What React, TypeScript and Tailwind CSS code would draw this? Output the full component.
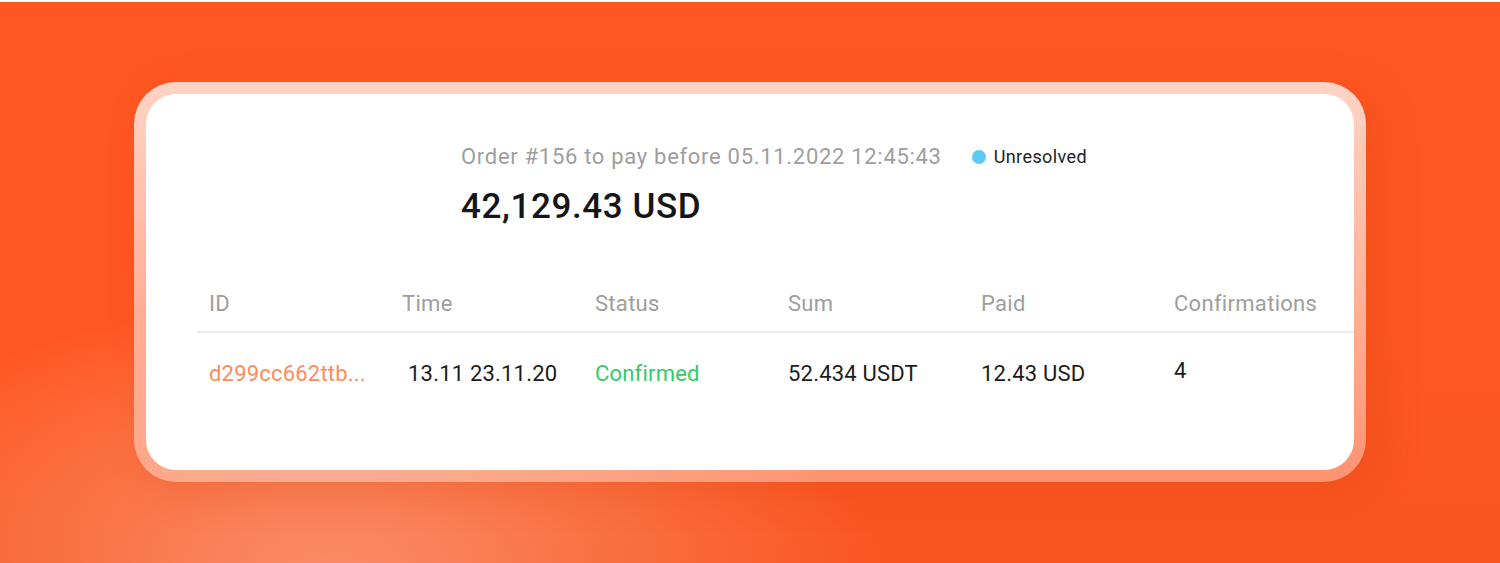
import React from "react";

const cols = ["ID", "Time", "Status", "Sum", "Paid", "Confirmations"];

export default function App() {
  return (
    <div className="w-[1500px] h-[563px] overflow-hidden relative bg-[#ff5722] font-['Roboto',sans-serif]">
      <div className="absolute inset-0 bg-[radial-gradient(ellipse_560px_300px_at_330px_600px,rgba(255,175,145,1),rgba(255,145,105,0.75)_45%,rgba(255,90,40,0)_100%)]" />
      <div className="absolute inset-0 bg-[linear-gradient(180deg,rgba(255,90,32,0)_60%,rgba(235,80,30,0.3)_100%)]" />
      <div className="absolute left-0 right-0 top-0 h-[2px] bg-white" />
      <div className="relative pt-[82px] pl-[134px]">
        <div className="w-[1232px] h-[400px] rounded-[42px] p-[12px] bg-[linear-gradient(180deg,rgba(255,255,255,0.74),rgba(255,255,255,0.36))] shadow-[14px_8px_40px_rgba(200,60,10,0.22)]">
          <div className="w-full h-full rounded-[30px] bg-white flex flex-col">
            <div className="pl-[315px] pt-[50px] flex flex-col">
              <div className="flex items-center">
                <span className="text-[22px] leading-[26px] tracking-[0.7px] text-[#9e9e9e]">
                  Order #156 to pay before 05.11.2022 12:45:43
                </span>
                <span className="ml-[30px] w-[14px] h-[14px] rounded-full bg-[#5ec9f6]" />
                <span className="ml-[8px] text-[18px] leading-[22px] tracking-[0.4px] text-[#222]">Unresolved</span>
              </div>
              <div className="mt-[17px] text-[35px] leading-[40px] font-medium text-[#161616] tracking-[0.6px]">
                42,129.43 USD
              </div>
            </div>
            <div className="mt-[64px] ml-[51px]">
              <div className="grid grid-cols-[repeat(6,193px)] border-b-2 border-[#ececec] pb-[14px]">
                {cols.map((c) => (
                  <div key={c} className="pl-[12px] text-[22px] leading-[26px] tracking-[0.3px] text-[#9e9e9e]">
                    {c}
                  </div>
                ))}
              </div>
              <div className="grid grid-cols-[repeat(6,193px)] pt-[28px] text-[22px] leading-[26px] tracking-[0.2px] text-[#1c1c1c]">
                <div className="pl-[12px] text-[#ff8a5c]">d299cc662ttb...</div>
                <div className="pl-[18px]">13.11 23.11.20</div>
                <div className="pl-[12px] text-[#2fcc6b]">Confirmed</div>
                <div className="pl-[12px]">52.434 USDT</div>
                <div className="pl-[12px]">12.43 USD</div>
                <div className="pl-[12px] -mt-[3px]">4</div>
              </div>
            </div>
          </div>
        </div>
      </div>
    </div>
  );
}
